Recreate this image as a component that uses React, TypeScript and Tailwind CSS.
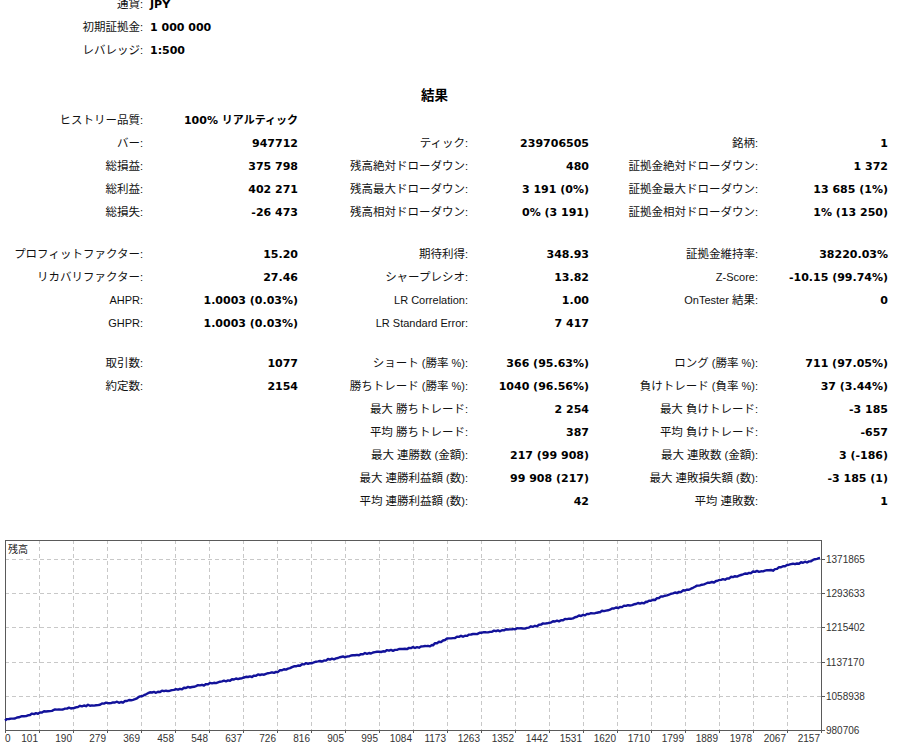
import React from 'react';

type Cells = string[];

const labelCls =
  "text-right whitespace-nowrap text-[11px] leading-[23px] text-[#111] font-['Liberation_Sans','Noto_Sans_CJK_JP',sans-serif]";
const valueBase =
  "whitespace-nowrap text-[11px] leading-[23px] font-bold text-black font-['DejaVu_Sans','Noto_Sans_CJK_JP',sans-serif]";

const summary: [string, string][] = [
  ['通貨:', 'JPY'],
  ['初期証拠金:', '1 000 000'],
  ['レバレッジ:', '1:500'],
];

const sectionB: Cells[] = [
  ['ヒストリー品質:', '100% リアルティック', '', '', '', ''],
  ['バー:', '947712', 'ティック:', '239706505', '銘柄:', '1'],
  ['総損益:', '375 798', '残高絶対ドローダウン:', '480', '証拠金絶対ドローダウン:', '1 372'],
  ['総利益:', '402 271', '残高最大ドローダウン:', '3 191 (0%)', '証拠金最大ドローダウン:', '13 685 (1%)'],
  ['総損失:', '-26 473', '残高相対ドローダウン:', '0% (3 191)', '証拠金相対ドローダウン:', '1% (13 250)'],
];

const sectionC: Cells[] = [
  ['プロフィットファクター:', '15.20', '期待利得:', '348.93', '証拠金維持率:', '38220.03%'],
  ['リカバリファクター:', '27.46', 'シャープレシオ:', '13.82', 'Z-Score:', '-10.15 (99.74%)'],
  ['AHPR:', '1.0003 (0.03%)', 'LR Correlation:', '1.00', 'OnTester 結果:', '0'],
  ['GHPR:', '1.0003 (0.03%)', 'LR Standard Error:', '7 417', '', ''],
];

const sectionD: Cells[] = [
  ['取引数:', '1077', 'ショート (勝率 %):', '366 (95.63%)', 'ロング (勝率 %):', '711 (97.05%)'],
  ['約定数:', '2154', '勝ちトレード (勝率 %):', '1040 (96.56%)', '負けトレード (負率 %):', '37 (3.44%)'],
  ['', '', '最大 勝ちトレード:', '2 254', '最大 負けトレード:', '-3 185'],
  ['', '', '平均 勝ちトレード:', '387', '平均 負けトレード:', '-657'],
  ['', '', '最大 連勝数 (金額):', '217 (99 908)', '最大 連敗数 (金額):', '3 (-186)'],
  ['', '', '最大 連勝利益額 (数):', '99 908 (217)', '最大 連敗損失額 (数):', '-3 185 (1)'],
  ['', '', '平均 連勝利益額 (数):', '42', '平均 連敗数:', '1'],
];

// the Japanese glyphs sit a touch larger than the latin ones in the report
function Label({ text }: { text: string }) {
  const parts = text.split(/([\u3040-\u30ff\u4e00-\u9fff]+)/);
  return (
    <div className={labelCls}>
      {parts.map((p, i) =>
        i % 2 === 1 ? (
          <span key={i} className="text-[11.5px]">
            {p}
          </span>
        ) : (
          p
        ),
      )}
    </div>
  );
}

function Section({ rows, className }: { rows: Cells[]; className?: string }) {
  return (
    <div className={`grid grid-cols-[143px_155px_170px_121px_169px_130px] auto-rows-[23px] ${className ?? ''}`}>
      {rows.map((row, i) =>
        row.map((cell, j) =>
          j % 2 === 0 ? (
            <Label key={`${i}-${j}`} text={cell} />
          ) : (
            <div key={`${i}-${j}`} className={`${valueBase} text-right`}>
              {cell}
            </div>
          ),
        ),
      )}
    </div>
  );
}

// rough trace of the balance curve, page x / chart-local y
const keyPoints: [number, number][] = [
  [5, 190], [20, 187], [38, 183], [55, 180], [72, 178], [88, 175], [92, 176], [107, 173], [123, 172],
  [135, 169], [140, 167], [148, 163], [174, 160], [208, 154], [242, 148], [276, 142], [300, 135],
  [343, 127], [377, 122], [411, 118], [428, 116], [433, 115], [437, 113], [447, 109], [480, 103],
  [513, 99], [527, 98], [547, 93], [573, 88], [583, 85], [600, 82], [620, 77], [647, 72], [667, 65],
  [687, 60], [700, 55], [717, 51], [733, 47], [753, 42], [773, 40], [787, 35], [807, 32], [820, 28],
];

function curve(): string {
  const pts: string[] = [];
  for (let k = 0; k < keyPoints.length - 1; k++) {
    const [x0, y0] = keyPoints[k];
    const [x1, y1] = keyPoints[k + 1];
    for (let x = x0; x < x1; x += 2) {
      const t = (x - x0) / (x1 - x0);
      const n = Math.sin(x * 1.7) * 0.45 + Math.sin(x * 0.53) * 0.35;
      pts.push(`${x},${(y0 + (y1 - y0) * t + n).toFixed(1)}`);
    }
  }
  const last = keyPoints[keyPoints.length - 1];
  pts.push(`${last[0]},${last[1]}`);
  return pts.join(' ');
}

const yLabels = ['980706', '1058938', '1137170', '1215402', '1293633', '1371865'];
const xLabels = [
  '0', '101', '190', '279', '369', '458', '548', '637', '726', '816', '905', '995', '1084',
  '1173', '1263', '1352', '1442', '1531', '1620', '1710', '1799', '1889', '1978', '2067', '2157',
];

function BalanceChart() {
  const left = 5;
  const right = 821;
  const top = 10;
  const bottom = 200;
  const vx = xLabels.map((_, k) => left + k * 34);
  const hy = yLabels.map((_, k) => bottom - k * 34.2);

  return (
    <svg width={900} height={220} className="block">
      {vx.slice(1, -1).map((x) => (
        <line key={`v${x}`} x1={x + 0.5} y1={top} x2={x + 0.5} y2={bottom} stroke="#c8c8c8" strokeDasharray="4 3" />
      ))}
      {hy.slice(1).map((y) => (
        <line key={`h${y}`} x1={left} y1={Math.round(y) + 0.5} x2={right} y2={Math.round(y) + 0.5} stroke="#c8c8c8" strokeDasharray="4 3" />
      ))}
      <rect x={left + 0.5} y={top + 0.5} width={right - left} height={bottom - top} fill="none" stroke="#5a5a5a" />
      {vx.map((x) => (
        <line key={`tx${x}`} x1={x + 0.5} y1={bottom} x2={x + 0.5} y2={bottom + 3} stroke="#5a5a5a" />
      ))}
      {hy.map((y) => (
        <line key={`ty${y}`} x1={right} y1={Math.round(y) + 0.5} x2={right + 4} y2={Math.round(y) + 0.5} stroke="#5a5a5a" />
      ))}
      <polyline points={curve()} fill="none" stroke="#12129a" strokeWidth={2.4} strokeLinejoin="round" />
      <text x={8} y={23} className="fill-[#222] text-[10px] font-['Noto_Sans_CJK_JP',sans-serif]">
        残高
      </text>
      {yLabels.map((t, k) => (
        <text key={t} x={826} y={hy[k] + 4} className="fill-[#333] text-[10px] font-['Liberation_Sans',sans-serif]">
          {t}
        </text>
      ))}
      {xLabels.map((t, k) => (
        <text
          key={t}
          x={k === 0 ? left : vx[k] - 1}
          y={212}
          textAnchor={k === 0 ? 'start' : 'end'}
          className="fill-[#333] text-[10px] font-['Liberation_Sans',sans-serif]"
        >
          {t}
        </text>
      ))}
    </svg>
  );
}

export default function App() {
  return (
    <div className="h-[750px] w-[900px] overflow-hidden bg-white">
      <div className="-mt-[7px] grid grid-cols-[143px_auto] auto-rows-[23px]">
        {summary.map(([label, value]) => (
          <React.Fragment key={label}>
            <Label text={label} />
            <div className={`${valueBase} pl-[7px] text-left`}>{value}</div>
          </React.Fragment>
        ))}
      </div>
      <div className="mt-[21px] h-[23px] w-[869px] text-center text-[13.5px] font-bold leading-[23px] text-black font-['Noto_Sans_CJK_JP',sans-serif]">
        結果
      </div>
      <Section rows={sectionB} className="mt-[3px]" />
      <Section rows={sectionC} className="mt-[19px]" />
      <Section rows={sectionD} className="mt-[17px]" />
      <div className="mt-[17px]">
        <BalanceChart />
      </div>
    </div>
  );
}
